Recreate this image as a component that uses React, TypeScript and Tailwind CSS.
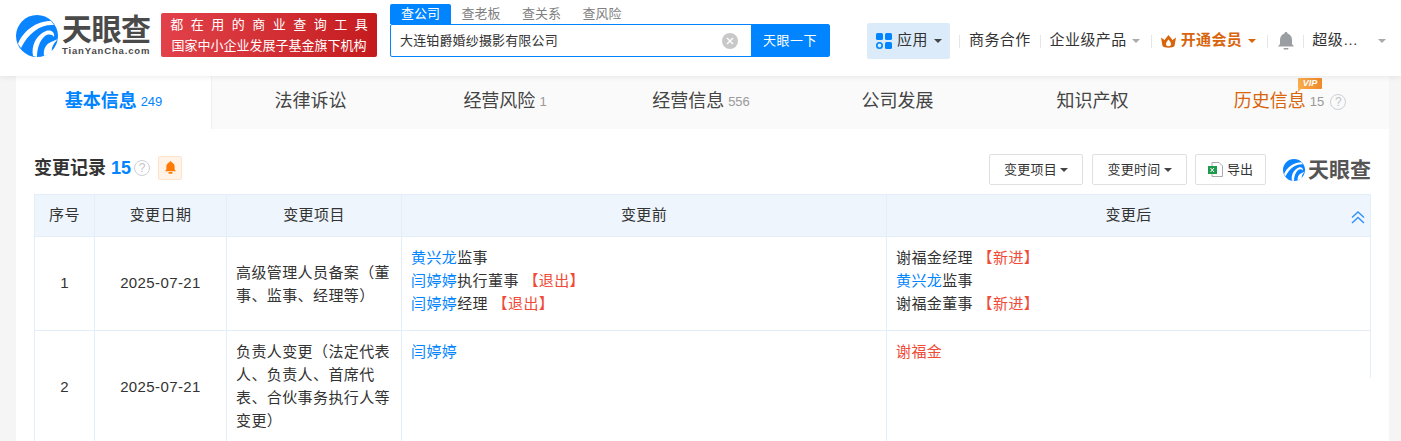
import React from 'react';

const FONT = '"Liberation Sans", "Noto Sans CJK SC", sans-serif';

const Logo = ({ size }: { size: number }) => (
  <svg width={size} height={size} viewBox="0 0 42 42" className="shrink-0">
    <circle cx="21" cy="21" r="21" fill="#0a84ff" />
    <path d="M2 29C7 16 20 6 35 6L38 10C25 9 13 17 5 33Z" fill="#fff" />
    <path d="M17 41C15 31 20 20 30 16C35 14.500 39 17 38 22C36 19 32 19 29 21C24 25 21 33 21 42Z" fill="#fff" />
    <path d="M28 41C27 34 30 29 35 27L42 24C37 29 35 33 36 37Z" fill="#fff" />
  </svg>
);

const Caret = ({ className }: { className: string }) => (
  <span className={`block shrink-0 w-0 h-0 border-x-[4px] border-x-transparent border-t-[4px] ${className}`} />
);

const Divider = ({ className }: { className: string }) => <span className={`block shrink-0 w-px h-[13px] bg-[#e6e6e6] ${className}`} />;

const Help = ({ className }: { className: string }) => (
  <span className={`flex shrink-0 w-[16px] h-[16px] items-center justify-center rounded-full border border-[#ccd0d6] text-[#bfc4cb] text-[12px] leading-none ${className}`}>
    ?
  </span>
);

const Header = () => (
  <div className="h-[76px] bg-white shadow-[0_1px_6px_rgba(0,0,0,0.08)] flex relative z-10">
    <div className="w-[161px] pl-[16px] pt-[15px] flex gap-[4px] shrink-0">
      <Logo size={42} />
      <div className="flex flex-col">
        <span className="text-[30px] leading-[30px] font-bold text-[#4a4a4a] tracking-[-0.5px] whitespace-nowrap">天眼查</span>
        <span className="text-[9.5px] leading-[11px] font-bold text-[#4a4a4a] tracking-[0.85px] whitespace-nowrap">TianYanCha.com</span>
      </div>
    </div>
    <div className="mt-[13px] w-[216px] h-[44px] rounded-[2px] bg-gradient-to-r from-[#e2414a] to-[#c41a1d] text-white text-[13px] leading-[21px] flex flex-col items-center justify-center shrink-0">
      <span className="tracking-[7.5px] pl-[7.5px] whitespace-nowrap">都在用的商业查询工具</span>
      <span className="whitespace-nowrap">国家中小企业发展子基金旗下机构</span>
    </div>
    <div className="ml-[13px] w-[440px] pt-[4px] shrink-0">
      <div className="flex h-[20px] text-[13px] text-[#808080] leading-[20px]">
        <span className="w-[61px] bg-[#0084ff] text-white text-center rounded-t-[2px]">查公司</span>
        <span className="w-[60px] text-center">查老板</span>
        <span className="w-[61px] text-center">查关系</span>
        <span className="w-[60px] text-center">查风险</span>
      </div>
      <div className="flex h-[33px] border border-[#0084ff] rounded-[2px]">
        <div className="flex-1 flex items-center justify-between pl-[9px] pr-[13px] text-[13px] tracking-[0.15px] text-[#333]">
          <span>大连铂爵婚纱摄影有限公司</span>
          <span className="w-[16px] h-[16px] rounded-full bg-[#c8c8c8] text-white flex items-center justify-center">
            <svg width="8" height="8" viewBox="0 0 8 8" stroke="#fff" strokeWidth="1.4"><path d="M1 1l6 6M7 1l-6 6" /></svg>
          </span>
        </div>
        <div className="w-[78px] bg-[#0084ff] text-white text-[13px] tracking-[0.5px] flex items-center justify-center">天眼一下</div>
      </div>
    </div>
    <div className="ml-[37px] mt-[23px] h-[36px] flex items-center text-[15px] tracking-[0.4px] text-[#333] whitespace-nowrap">
      <div className="w-[83px] h-[36px] rounded-[2px] bg-[#dcebfa] flex items-center pl-[9px] gap-[5px]">
        <svg width="16" height="16" viewBox="0 0 16 16" fill="#0084ff">
          <rect x="0" y="0" width="7" height="7" rx="1.5" />
          <rect x="9" y="0" width="7" height="7" rx="1.5" />
          <rect x="9" y="9" width="7" height="7" rx="1.5" />
          <circle cx="3.5" cy="12.5" r="2.7" fill="none" stroke="#0084ff" strokeWidth="1.6" />
        </svg>
        <span className="mb-[2px]">应用</span>
        <Caret className="border-t-[#444] ml-[1px]" />
      </div>
      <Divider className="ml-[9px]" />
      <span className="ml-[9px] mb-[2px]">商务合作</span>
      <Divider className="ml-[9px]" />
      <span className="ml-[9px] mb-[2px]">企业级产品</span>
      <Caret className="border-t-[#aaa] ml-[5px]" />
      <Divider className="ml-[11px]" />
      <svg className="ml-[9px] shrink-0" width="15" height="13" viewBox="0 0 15 13" fill="#d8650c">
        <path d="M0 2.500L3.500 5 7.500 0 11.500 5 15 2.500 13.500 11C12 13.300 3 13.300 1.500 11Z" />
        <path d="M7.500 4.500C9 6.500 10 7.500 10 8.700A2.500 2.500 0 0 1 5 8.700C5 7.500 6 6.500 7.500 4.500Z" fill="#fff" />
      </svg>
      <span className="ml-[5px] mb-[2px] font-bold text-[#d8650c]">开通会员</span>
      <Caret className="border-t-[#d8650c] ml-[6px]" />
      <Divider className="ml-[11px]" />
      <svg className="ml-[10px] shrink-0" width="16" height="18" viewBox="0 0 16 18" fill="#9a9ea3">
        <path d="M8 0c1 0 1.500.7 1.500 1.500C12.500 2.300 14 5 14 8v4l2 2.500H0L2 12V8c0-3 1.500-5.700 4.500-6.500C6.500.7 7 0 8 0Z" />
        <rect x="5.500" y="16" width="5" height="1.500" rx=".7" />
      </svg>
      <Divider className="ml-[9px]" />
      <span className="ml-[8px] mb-[2px] w-[66px]">超级…</span>
      <Caret className="border-t-[#aaa]" />
    </div>
  </div>
);

const tabs: { label: string; count?: string; active?: boolean; vip?: boolean; w: string }[] = [
  { label: '基本信息', count: '249', active: true, w: 'w-[196px]' },
  { label: '法律诉讼', w: 'w-[197px]' },
  { label: '经营风险', count: '1', w: 'w-[192px]' },
  { label: '经营信息', count: '556', w: 'w-[200px]' },
  { label: '公司发展', w: 'w-[193px]' },
  { label: '知识产权', w: 'w-[197px]' },
  { label: '历史信息', count: '15', vip: true, w: 'w-[198px]' },
];

const Tabs = () => (
  <div className="flex h-[53px] bg-[#fafafa]">
    {tabs.map((t) => (
      <div
        key={t.label}
        className={`${t.w} pb-[2px] flex items-center justify-center gap-[4px] relative ${t.active ? 'bg-white border-r border-[#f0f0f0]' : ''}`}
      >
        <span className={`text-[18px] ${t.active ? 'font-bold text-[#0084ff]' : t.vip ? 'text-[#d8650c]' : 'text-[#444]'}`}>
          {t.label}
        </span>
        {t.count && <span className={`text-[13px] mt-[1px] ${t.active ? 'text-[#0084ff]' : 'text-[#999]'}`}>{t.count}</span>}
        {t.vip && (
          <>
            <Help className="ml-[2px]" />
            <span className="absolute left-[107px] top-[2px] w-[24px] h-[11px] rounded-[1px] bg-gradient-to-r from-[#f9ad4a] to-[#f0882a] text-white text-[9px] leading-[11px] font-bold italic text-center">VIP</span>
            <span className="absolute left-[107px] top-[13px] w-0 h-0 border-t-[3px] border-t-[#f9ad4a] border-r-[3px] border-r-transparent" />
          </>
        )}
      </div>
    ))}
  </div>
);

const ToolButton = ({ label, w }: { label: string; w: string }) => (
  <div className={`${w} h-[31px] border border-[#e0e0e0] rounded-[2px] flex items-center justify-center gap-[3px] text-[13px] tracking-[0.3px] text-[#333]`}>
    <span>{label}</span>
    <Caret className="border-t-[#444]" />
  </div>
);

const cell = 'border-r border-b border-[#e4eef8]';
const Blue = ({ children }: { children: React.ReactNode }) => <span className="text-[#0084ff]">{children}</span>;
const Red = ({ children }: { children: React.ReactNode }) => <span className="text-[#f04a38]">{children}</span>;

const Table = () => (
  <div className="mt-[9px] border-l border-t border-[#e4eef8] grid grid-cols-[60px_132px_175px_485px_484px] text-[15px] tracking-[0.4px] text-[#333]">
    {['序号', '变更日期', '变更项目', '变更前'].map((h) => (
      <div key={h} className={`${cell} h-[42px] bg-[#eef5fc] flex items-center justify-center`}>{h}</div>
    ))}
    <div className={`${cell} h-[42px] bg-[#eef5fc] flex items-center justify-center relative`}>
      变更后
      <svg className="absolute right-[5px] top-[16px]" width="14" height="13" viewBox="0 0 14 13" fill="none" stroke="#2f8fff" strokeWidth="1.4">
        <path d="M1 6.500L7 1l6 5.500M1 12L7 6.500 13 12" />
      </svg>
    </div>

    <div className={`${cell} h-[94px] flex items-center justify-center`}>1</div>
    <div className={`${cell} flex items-center justify-center`}>2025-07-21</div>
    <div className={`${cell} flex items-center px-[9px] leading-[23px]`}>高级管理人员备案（董事、监事、经理等）</div>
    <div className={`${cell} px-[9px] pt-[9px] leading-[23px]`}>
      <div><Blue>黄兴龙</Blue>监事</div>
      <div><Blue>闫婷婷</Blue>执行董事 <Red>【退出】</Red></div>
      <div><Blue>闫婷婷</Blue>经理 <Red>【退出】</Red></div>
    </div>
    <div className={`${cell} px-[9px] pt-[9px] leading-[23px]`}>
      <div>谢福金经理 <Red>【新进】</Red></div>
      <div><Blue>黄兴龙</Blue>监事</div>
      <div>谢福金董事 <Red>【新进】</Red></div>
    </div>

    <div className={`${cell} h-[112px] border-b-0 flex items-center justify-center`}>2</div>
    <div className={`${cell} border-b-0 flex items-center justify-center`}>2025-07-21</div>
    <div className={`${cell} border-b-0 flex items-center px-[9px] pb-[2px] leading-[23px]`}>负责人变更（法定代表人、负责人、首席代表、合伙事务执行人等变更）</div>
    <div className={`${cell} border-b-0 px-[9px] pt-[9px] leading-[23px]`}><Blue>闫婷婷</Blue></div>
    <div className="h-[47px] border-r border-[#e4eef8] px-[9px] pt-[9px] leading-[23px]"><Red>谢福金</Red></div>
  </div>
);

export default function App() {
  return (
    <div className="w-[1401px] h-[441px] overflow-hidden bg-[#f5f5f5]" style={{ fontFamily: FONT }}>
      <Header />
      <div className="ml-[16px] w-[1373px] bg-white">
        <Tabs />
        <div className="pl-[18px] pt-[25px] pr-[18px]">
          <div className="flex items-center h-[31px]">
            <span className="text-[18px] mb-[2px] font-bold text-[#333]">变更记录</span>
            <span className="ml-[5px] mb-[2px] text-[18px] font-bold text-[#0084ff]">15</span>
            <Help className="ml-[3px] mb-[3px]" />
            <span className="ml-[8px] mb-[4px] w-[24px] h-[24px] rounded-[2px] bg-[#fff3e8] border border-[#ffe3cc] flex items-center justify-center">
              <svg width="11" height="13" viewBox="0 0 16 18" fill="#ff7a00">
                <path d="M8 0c1 0 1.500.7 1.500 1.500C12.500 2.300 14 5 14 8v4l2 2.500H0L2 12V8c0-3 1.500-5.700 4.500-6.500C6.500.7 7 0 8 0Z" />
                <rect x="5" y="15.500" width="6" height="2.500" rx="1" />
              </svg>
            </span>
            <div className="ml-auto flex items-center">
              <ToolButton label="变更项目" w="w-[94px]" />
              <div className="w-[9px]" />
              <ToolButton label="变更时间" w="w-[95px]" />
              <div className="w-[8px]" />
              <div className="w-[71px] h-[31px] border border-[#e0e0e0] rounded-[2px] flex items-center justify-center gap-[4px] text-[13px] text-[#333]">
                <svg width="15" height="15" viewBox="0 0 15 15">
                  <path d="M4 .5h7l3.500 3.500v10.500H4Z" fill="#fff" stroke="#aaa" />
                  <rect x="0" y="4" width="9" height="8" fill="#1e9a4d" />
                  <path d="M2.500 6l3.500 4M6 6l-3.500 4" stroke="#fff" strokeWidth="1" />
                </svg>
                导出
              </div>
              <div className="flex items-center gap-[3px] ml-[17px] w-[88px]">
                <Logo size={22} />
                <span className="text-[21px] leading-[22px] font-bold text-[#555] whitespace-nowrap">天眼查</span>
              </div>
            </div>
          </div>
          <Table />
        </div>
      </div>
    </div>
  );
}
